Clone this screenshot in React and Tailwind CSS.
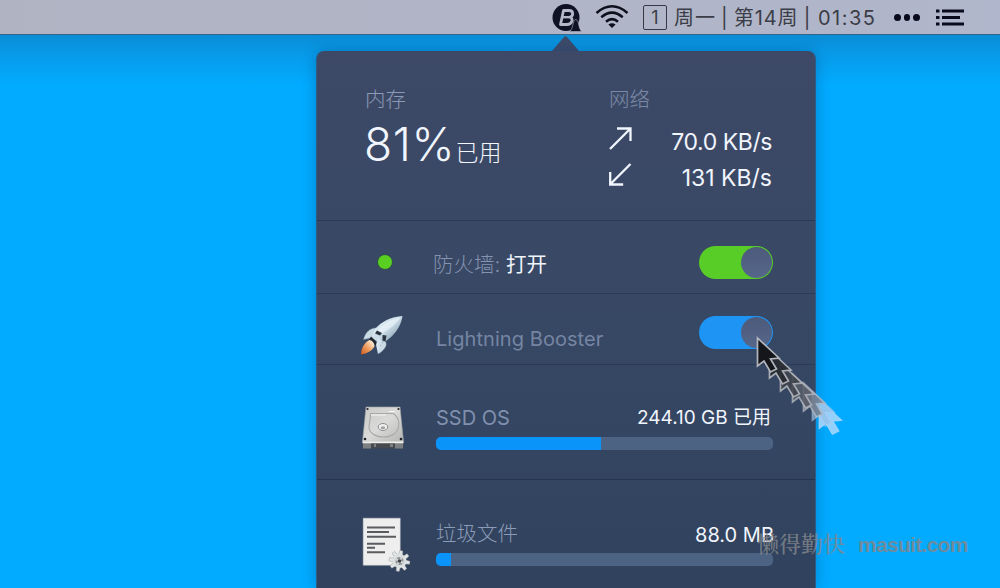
import React from 'react';

const SANS = "font-['Inter','Noto_Sans_CJK_SC',sans-serif]";

function BoosterGlyph() {
  return (
    <svg className="h-8 w-8 shrink-0" viewBox="0 0 32 32">
      <circle cx="15" cy="14.500" r="13.500" fill="#0f1124" />
      <path d="M12.500 7.500h5.500c5 0 4.500 6 .8 6.600 3.800.8 2.800 7.400-3 7.400H9.500z" fill="none" stroke="#b3b7c6" strokeWidth="2.800" strokeLinejoin="round" />
      <path d="M11.500 14.200h7" stroke="#b3b7c6" strokeWidth="2.400" />
      <path d="M18 28.500c4.500-1 3.500-12 6.500-12 4 0 2.500 10 6.500 12z" fill="#0f1124" stroke="#b3b7c6" strokeWidth=".6" />
    </svg>
  );
}

function WifiGlyph() {
  return (
    <svg className="h-[26px] w-[34px] shrink-0" viewBox="0 0 34 26" fill="none" stroke="#0d0f1c" strokeWidth="2.500">
      <path d="M1.500 9Q17-4.500 32.500 9" />
      <path d="M6.300 13.300Q17 4 27.700 13.300" />
      <path d="M11 17.700Q17 12.500 23 17.700" />
      <path d="M13.400 20.600Q17 17.800 20.600 20.600L17 24z" fill="#0d0f1c" stroke="none" />
    </svg>
  );
}

function Rocket() {
  return (
    <svg className="h-[42px] w-[44px]" viewBox="0 0 44 42">
      <defs>
        <linearGradient id="hull" x1="0.200" y1="0.200" x2="0.800" y2="0.800">
          <stop offset="0" stopColor="#e4f0f7" />
          <stop offset="0.500" stopColor="#c5d8e4" />
          <stop offset="1" stopColor="#8ba2b2" />
        </linearGradient>
        <linearGradient id="flame" x1="1" y1="0" x2="0" y2="1">
          <stop offset="0.100" stopColor="#fff4dc" />
          <stop offset="0.500" stopColor="#f0a265" />
          <stop offset="1" stopColor="#d05a1d" />
        </linearGradient>
      </defs>
      <path d="M18 13C10 12 5 18 3.500 24.500L11 23zM24 25c5 4 1 10-6 14l-1-10z" fill="#c9dae5" stroke="#8399aa" strokeWidth=".4" />
      <path d="M42.500 1C31 1.500 21 7 15 14l-4 9 8 7 7-4C35 20 41 11 42.500 1z" fill="url(#hull)" />
      <path d="M41 2C31 4 22 10 17 16l4 3C30 14 37 8 41 2z" fill="#f2f9fd" opacity=".6" />
      <path d="M17 15.500l5 2.500-2 2.500-5-2zM22.500 20l4 .5-1 6-3-1z" fill="#2c3440" />
      <path d="M11 21.500l10 9-3 2-9-8z" fill="#23272f" />
      <path d="M18 22l4 4-4 12-2-8z" fill="#d3e2ec" />
      <path d="M9.500 25C5 27 1 33 1 39.500c6-1 12-4 13.500-8.500-.5-3-2-5.500-5-6z" fill="url(#flame)" />
    </svg>
  );
}

function Drive() {
  return (
    <svg className="h-[43px] w-[42px]" viewBox="0 0 42 43">
      <defs>
        <linearGradient id="plate" x1="0" y1="0" x2="1" y2="1">
          <stop offset="0" stopColor="#c9c9c7" />
          <stop offset="0.500" stopColor="#dadad8" />
          <stop offset="1" stopColor="#b5b5b3" />
        </linearGradient>
      </defs>
      <path d="M.5 35h41v7.500H.5z" fill="#46494d" />
      <path d="M1 37h8v5.500H1zM12 38h2v3h-2zM28 38h3v3h-3zM33 37h8v5.500h-8z" fill="#7d8083" />
      <path d="M4 1h34l3.500 34.500H.5z" fill="url(#plate)" stroke="#a0a2a4" strokeWidth=".6" />
      <path d="M.5 35.200h41v2H.5z" fill="#efefed" />
      <path d="M8.500 7.500h23c5 4 6 9 5 13.500-1 6-7 10-15 10S7 27 7 21c0-3 1.500-7 1.500-13.500z" fill="none" stroke="#a8a9a7" strokeWidth="1.100" />
      <path d="M9 9h15M27 5.500h6" stroke="#f8f8f6" strokeWidth="1.200" />
      <ellipse cx="21" cy="21" rx="4.800" ry="3.500" fill="#eee" stroke="#8b8c8c" strokeWidth="1" />
      <ellipse cx="21" cy="21.800" rx="2.200" ry="1.500" fill="#a1a2a3" />
      <g fill="#202328">
        <circle cx="5.500" cy="3" r="1.100" /><circle cx="36.500" cy="3" r="1.100" />
        <circle cx="3" cy="33" r="1.300" /><circle cx="39" cy="33" r="1.300" />
      </g>
    </svg>
  );
}

function JunkFile() {
  const teeth = [0, 45, 90, 135, 180, 225, 270, 315];
  return (
    <svg className="h-[55px] w-[48px]" viewBox="0 0 48 55">
      <path d="M1.200 1.200h37v47h-37z" fill="#eeeeee" stroke="#c9cccf" strokeWidth=".5" />
      <path d="M5 10.500h28M5 15h22M5 19.700h29M5 26.800h18M5 30.800h8M5 35.300h18" stroke="#595b5e" strokeWidth="1.900" />
      <g transform="translate(37.500 44)">
        {teeth.map((a) => (
          <path key={a} transform={`rotate(${a + 10})`} d="M-2-6l.5-4.500h3L2-6z" fill="#e2e5e6" stroke="#8d9194" strokeWidth=".4" />
        ))}
        <circle r="5.500" fill="#8e9295" stroke="#dde0e1" strokeWidth="3" />
        <path d="M-5-2.500l10 5M-3 5L3-5" stroke="#d3d6d7" strokeWidth="2" />
        <circle r="1.800" fill="#3d4144" />
      </g>
    </svg>
  );
}

function Toggle({ color }) {
  return (
    <div className={`flex h-[33px] w-[74px] shrink-0 items-center justify-end rounded-full pr-[1px] ${color}`}>
      <div className="size-[31px] rounded-full bg-linear-to-b from-[#4c5a7b] to-[#56678a]" />
    </div>
  );
}

function Meter({ fill }) {
  return (
    <div className="h-[13px] w-[337px] overflow-hidden rounded-[5px] bg-[#4d6384]">
      <div className={`h-full bg-[#0a93f9] ${fill}`} />
    </div>
  );
}

const TRAIL = [
  { x: 62, y: 62, fill: '#a3d5fc', o: 0.9, line: '#a9d8ff' },
  { x: 55, y: 54, fill: '#93bfe6', o: 0.65, line: '#a9cdee' },
  { x: 46, y: 45, fill: '#747b89', o: 0.8, line: '#b0b6c0' },
  { x: 35, y: 36, fill: '#585d68', o: 0.85, line: '#b0b4bc' },
  { x: 23, y: 25, fill: '#41454e', o: 0.9, line: '#b0b3ba' },
  { x: 12, y: 12, fill: '#282b32', o: 0.95, line: '#b0b3b9' },
  { x: 0, y: 0, fill: '#14161b', o: 1, line: '#b2b5bb' },
];

function PointerTrail() {
  return (
    <svg className="pointer-events-none absolute left-[755px] top-[335px] h-[104px] w-[94px]" viewBox="-2 -3 94 104">
      {TRAIL.map((p) => (
        <path
          key={p.x}
          transform={`translate(${p.x} ${p.y})`}
          d="M.5 0v28l6.500-5 6.500 11 6-3-6-10 8.500-1z"
          fill={p.fill}
          stroke={p.line}
          strokeWidth="1.700"
          opacity={p.o}
        />
      ))}
    </svg>
  );
}

function MenuBar() {
  return (
    <header className="flex h-[35px] items-start border-b border-[#35638a] bg-linear-to-r from-[#b0b3c2] to-[#b0b6cb] pl-[551px] text-[#3b3d47]">
      <div className="pt-[3px]"><BoosterGlyph /></div>
      <div className="ml-[12px] pt-[4px]"><WifiGlyph /></div>
      <div className="ml-[14px] mt-[5px] flex h-[25px] w-[24px] items-center justify-center rounded-[2px] border border-[#363944] text-[18px]">1</div>
      <div className="ml-[7px] w-[204px] whitespace-nowrap text-[20px] leading-[37px] tracking-[0.900px] [word-spacing:-1.300px]">
        周一 | 第14周 | <span className="ml-[1.500px] tracking-[1.500px]">01:35</span>
      </div>
      <div className="ml-[16px] flex gap-[3px] pt-[14px]">
        <i className="size-[6.500px] rounded-full bg-[#090b1c]" />
        <i className="size-[6.500px] rounded-full bg-[#090b1c]" />
        <i className="size-[6.500px] rounded-full bg-[#090b1c]" />
      </div>
      <svg className="ml-[16px] mt-[9px] h-[17px] w-[29px]" viewBox="0 0 29 17" stroke="#090b1c" strokeWidth="3">
        <path d="M0 2h3.500M0 8.500h3.500M0 15h3.500M6 2h22M6 8.500h18M6 15h22" />
      </svg>
    </header>
  );
}

export default function App() {
  return (
    <div className={`relative h-[588px] w-[1000px] overflow-hidden bg-[#02abff] ${SANS}`}>
      <MenuBar />
      <div className="flex h-[553px] flex-col bg-[linear-gradient(#0b8dd6,#079ceb_22px,#02abff_50px)] pl-[316px]">
        <svg className="ml-[236px] h-[16px] w-[27px] shrink-0" viewBox="0 0 27 16">
          <path d="M0 16L12 2Q13.500 .5 15 2L27 16z" fill="#3f4a67" />
        </svg>
        <main className="h-[537px] w-[500px] shrink-0 overflow-hidden rounded-t-[8px] border-x border-[#2d5c86] bg-linear-to-b from-[#3d4966] via-[#374865] to-[#30425d] text-[#f1f5fd] shadow-[0_0_14px_rgba(0,70,130,0.4)]">
          <section className="flex h-[170px] border-b border-[#2b3a56] pl-[48px]">
            <div className="w-[244px] pt-[34px]">
              <h2 className="text-[20.500px] font-light leading-[30px] text-[#8b9ab7]">内存</h2>
              <div className="flex items-baseline whitespace-nowrap leading-[59px]">
                <span className="-ml-[1px] text-[46px] font-light tracking-[0.700px]">81%</span>
                <span className="text-[23px] font-light">已用</span>
              </div>
            </div>
            <div className="w-[163px] pt-[34px]">
              <h2 className="text-[20.500px] font-light leading-[30px] text-[#7a89a6]">网络</h2>
              <div className="mt-[4px] flex h-[36px] items-center justify-between pt-[11px] text-[23px]">
                <svg className="-mt-[9px] h-[24px] w-[24px]" viewBox="0 0 24 24" fill="none" stroke="#f1f5fd" strokeWidth="2.300"><path d="M1 23L21 3M8 2.500h13.500v12.500" /></svg>
                <span className="tracking-[-0.430px]">70.0 KB/s</span>
              </div>
              <div className="flex h-[36px] items-center justify-between pt-[11px] text-[23px]">
                <svg className="-mt-[7px] h-[24px] w-[24px]" viewBox="0 0 24 24" fill="none" stroke="#f1f5fd" strokeWidth="2.300"><path d="M21.500 1L2 20.500M1.200 9v12.500h13" /></svg>
                <span>131 KB/s</span>
              </div>
            </div>
          </section>
          <section className="flex h-[73px] border-b border-[#2b3a56] pl-[60px]">
            <div className="mt-[33px] size-[16px] rounded-full border border-[#304b4c] bg-[#59cf22]" />
            <div className="ml-[40px] w-[266px] pt-[29px] text-[20.500px] leading-[30px] text-[#8493af]">
              <span className="font-light">防火墙: </span><span className="text-[#f1f5fd]">打开</span>
            </div>
            <div className="pt-[25px]"><Toggle color="bg-[#59cd27]" /></div>
          </section>
          <section className="flex h-[71px] border-b border-[#2b3a56] pl-[43px]">
            <div className="pt-[21px]"><Rocket /></div>
            <div className="ml-[32px] w-[263px] pt-[30px] text-[20px] leading-[30px] tracking-[0.060px] text-[#7585a2]">Lightning Booster</div>
            <div className="pt-[22px]"><Toggle color="bg-[#1e94f5]" /></div>
          </section>
          <section className="flex h-[115px] border-b border-[#26354f] pl-[45px]">
            <div className="pt-[41px]"><Drive /></div>
            <div className="ml-[32px] pt-[38px]">
              <div className="flex h-[34px] w-[335px] justify-between text-[20px] leading-[30px]">
                <span className="text-[#8090ae]">SSD OS</span>
                <span className="text-[19px]">244.10 GB 已用</span>
              </div>
              <Meter fill="w-[165px]" />
            </div>
          </section>
          <section className="flex h-[108px] pl-[45px]">
            <div className="pt-[37px]"><JunkFile /></div>
            <div className="ml-[26px] pt-[39px]">
              <div className="flex h-[34px] w-[338px] justify-between text-[20.500px] leading-[30px]">
                <span className="font-light text-[#8b9bb8]">垃圾文件</span>
                <span className="pt-[1px] text-[20px]">88.0 MB</span>
              </div>
              <Meter fill="w-[15px]" />
            </div>
          </section>
        </main>
      </div>
      <PointerTrail />
      <div className="absolute left-[757px] top-[530px] flex items-baseline whitespace-nowrap leading-[30px] text-[#82868b]/85">
        <span className="font-['Liberation_Serif','Noto_Serif_CJK_SC','Noto_Sans_CJK_SC',serif] text-[22px] font-medium">懒得勤快</span>
        <span className="ml-[13px] font-['Liberation_Sans',sans-serif] text-[21px] font-bold tracking-[-0.700px]">masuit.com</span>
      </div>
    </div>
  );
}
